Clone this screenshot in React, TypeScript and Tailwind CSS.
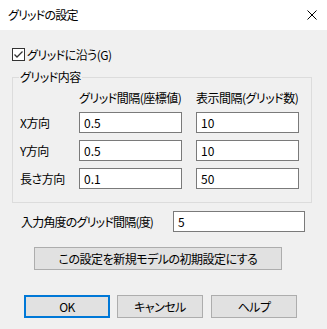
import React from "react";

const font = { fontFamily: '"Noto Sans CJK JP", "Noto Sans", sans-serif' };

function Field({ value, w = "w-[103px]" }: { value: string; w?: string }) {
  return (
    <div className={`${w} h-[21px] border border-[#7a7a7a] bg-white flex items-center pl-[4px] text-[12px] leading-none text-black tracking-normal`}>
      {value}
    </div>
  );
}

export default function App() {
  const rows: [string, string, string][] = [
    ["X方向", "0.5", "10"],
    ["Y方向", "0.5", "10"],
    ["長さ方向", "0.1", "50"],
  ];
  return (
    <div className="w-[327px] h-[329px] bg-[#f0f0f0] text-[12px] text-black overflow-hidden whitespace-nowrap tracking-[-0.5px] [font-feature-settings:'palt']" style={font}>
      <div className="h-[30px] bg-white flex items-center justify-between pl-[8px] pr-[10px]">
        <span className="leading-none tracking-[-0.8px]">グリッドの設定</span>
        <svg width="10" height="10" viewBox="0 0 10 10">
          <path d="M0.5 0.5 L9.5 9.5 M9.5 0.5 L0.5 9.5" stroke="#000" strokeWidth="1" />
        </svg>
      </div>
      <div className="px-[12px]">
        <div className="mt-[18px] flex items-center h-[13px] gap-[2px]">
          <div className="w-[13px] h-[13px] border border-[#333] bg-white flex items-center justify-center">
            <svg width="11" height="11" viewBox="0 0 11 11">
              <path d="M1.5 5.5 L4 8 L9.5 2.5" stroke="#333" strokeWidth="1.3" fill="none" />
            </svg>
          </div>
          <span className="leading-none">グリッドに沿う(G)</span>
        </div>
        <fieldset className="mt-[9px] w-[300px] h-[133px] border border-[#dcdcdc] px-[7px]">
          <legend className="ml-[-1px] px-[1px] leading-[14px]">グリッド内容</legend>
          <div className="flex mt-[7px] h-[14px] items-center leading-none">
            <span className="w-[59px]" />
            <span className="w-[117px]">グリッド間隔(座標値)</span>
            <span>表示間隔(グリッド数)</span>
          </div>
          <div className="flex flex-col gap-[7px] mt-[7px]">
            {rows.map(([label, a, b]) => (
              <div key={label} className="flex items-center">
                <span className="w-[59px] leading-none">{label}</span>
                <Field value={a} />
                <div className="w-[14px]" />
                <Field value={b} />
              </div>
            ))}
          </div>
        </fieldset>
        <div className="flex items-center mt-[8px]">
          <span className="w-[161px] pl-[9px] leading-none tracking-[-0.8px]">入力角度のグリッド間隔(度)</span>
          <Field value="5" w="w-[132px]" />
        </div>
        <div className="mt-[15px] pl-[22px]">
          <button className="w-[248px] h-[23px] bg-[#e1e1e1] border border-[#adadad] leading-none">
            この設定を新規モデルの初期設定にする
          </button>
        </div>
        <div className="mt-[25px] pl-[12px] flex gap-[7px]">
          <button className="w-[86px] h-[23px] bg-[#e1e1e1] border-2 border-[#0078d7] leading-none">OK</button>
          <button className="w-[86px] h-[23px] bg-[#e1e1e1] border border-[#adadad] leading-none ml-[0px]">キャンセル</button>
          <button className="w-[86px] h-[23px] bg-[#e1e1e1] border border-[#adadad] leading-none ml-[1px]">ヘルプ</button>
        </div>
      </div>
    </div>
  );
}
